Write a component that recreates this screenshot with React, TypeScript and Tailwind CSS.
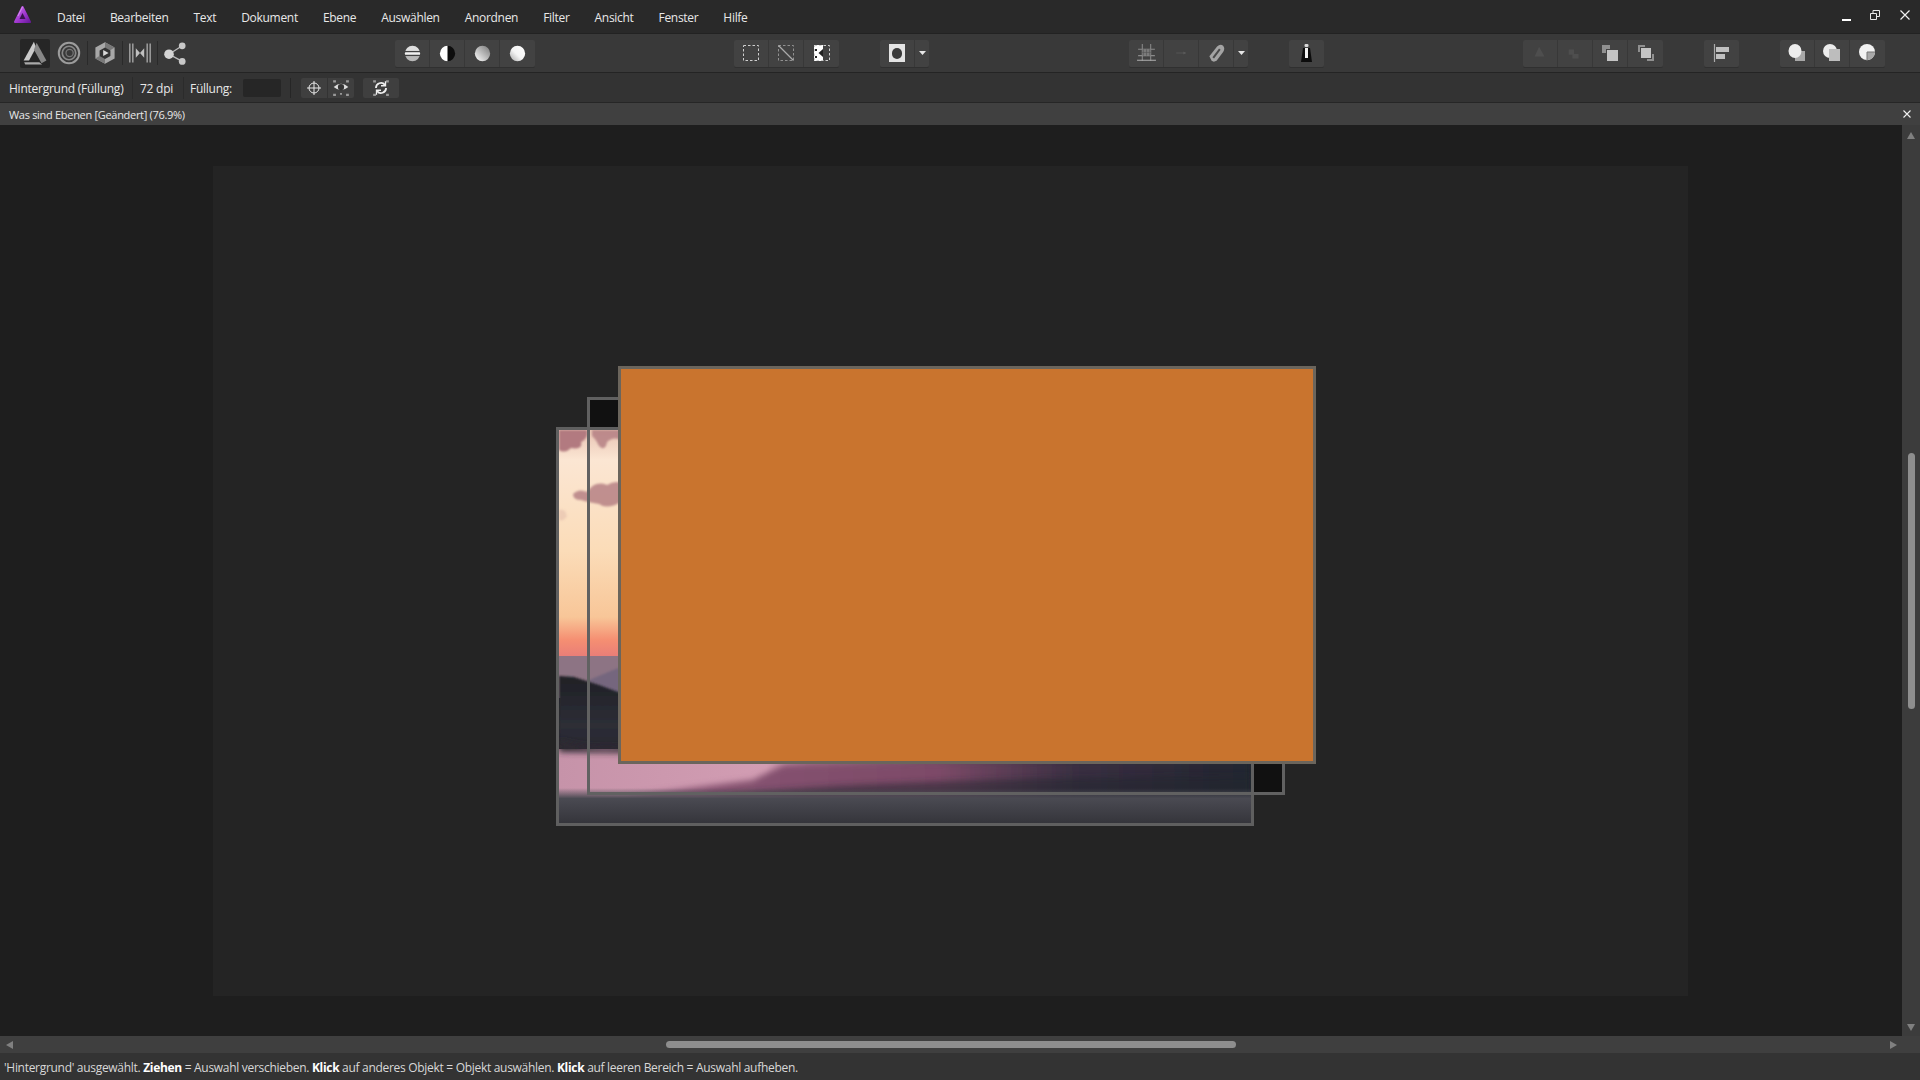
import type { ReactNode } from "react";

const menu = ["Datei", "Bearbeiten", "Text", "Dokument", "Ebene", "Auswählen", "Anordnen", "Filter", "Ansicht", "Fenster", "Hilfe"];

// Toolbar button, 35px wide, the groups sit them side by side
function Btn({ children, w = "w-[35px]" }: { children?: ReactNode; w?: string }) {
  return <div className={`${w} h-[27px] flex items-center justify-center bg-[#424242] border-r border-[#383838] last:border-r-0`}>{children}</div>;
}

function Group({ children, className = "" }: { children: ReactNode; className?: string }) {
  return <div className={`flex rounded-[2px] overflow-hidden shadow-[0_1px_0_#303030] ${className}`}>{children}</div>;
}

function Ico({ children, s = 20 }: { children: ReactNode; s?: number }) {
  return <svg width={s} height={s} viewBox="0 0 20 20" fill="none">{children}</svg>;
}

function Caret() {
  return <svg width="7" height="4" viewBox="0 0 7 4"><path d="M0 0h7L3.5 4z" fill="#e6e6e6" /></svg>;
}

function Logo() {
  return (
    <svg width="19" height="20" viewBox="0 0 19 20">
      <defs>
        <linearGradient id="lg" x1="0" y1="0" x2="1" y2="1">
          <stop offset="0" stopColor="#d070f0" />
          <stop offset="0.6" stopColor="#9c34cc" />
          <stop offset="1" stopColor="#6a1a9c" />
        </linearGradient>
      </defs>
      <path d="M9.5 2 L17 17 H2 Z" fill="url(#lg)" stroke="url(#lg)" strokeWidth="2" strokeLinejoin="round" />
      <path d="M9.5 8 L12.5 14 H6.5 Z" fill="#3a1450" />
      <path d="M9.5 2 L5 11" stroke="#e8a8ff" strokeWidth="1" opacity="0.7" />
    </svg>
  );
}

function PhotoPersona() {
  return (
    <svg width="26" height="26" viewBox="0 0 24 24">
      <path d="M11 1.5 L1.5 19 L6.5 19 L13 7 Z" fill="#cacaca" />
      <path d="M13.5 2.5 L22.5 19 L18 21.5 L11 9 Z" fill="#868686" />
      <path d="M2 20.5 L16 20.5 L18.5 22.5 L3 22.5 Z" fill="#aaaaaa" />
      <path d="M12 11.5 L15 17 H9 Z" fill="#262626" />
    </svg>
  );
}

function Photo() {
  return (
    <svg className="absolute inset-0 w-full h-full" viewBox="0 0 691 393" preserveAspectRatio="none">
      <defs>
        <linearGradient id="sky" x1="0" y1="0" x2="0" y2="1">
          <stop offset="0" stopColor="#e9c4b4" />
          <stop offset="0.13" stopColor="#fbe6d3" />
          <stop offset="0.53" stopColor="#fbdcb8" />
          <stop offset="0.82" stopColor="#f8c698" />
          <stop offset="0.92" stopColor="#f58f72" />
          <stop offset="1" stopColor="#e87c78" />
        </linearGradient>
        <linearGradient id="floor" x1="0" y1="0" x2="0" y2="1">
          <stop offset="0" stopColor="#4a4a52" stopOpacity="0" />
          <stop offset="0.3" stopColor="#4a4a52" />
          <stop offset="1" stopColor="#35353b" />
        </linearGradient>
        <linearGradient id="hill" x1="0" y1="0" x2="0" y2="1">
          <stop offset="0" stopColor="#1f2026" />
          <stop offset="0.6" stopColor="#2d2e36" />
          <stop offset="1" stopColor="#2a2530" />
        </linearGradient>
        <linearGradient id="mist" x1="0" y1="0" x2="1" y2="0">
          <stop offset="0" stopColor="#c693a9" />
          <stop offset="0.3" stopColor="#d29db3" />
          <stop offset="0.36" stopColor="#a77289" />
          <stop offset="0.75" stopColor="#2c2833" />
          <stop offset="1" stopColor="#22252f" />
        </linearGradient>
        <linearGradient id="ridge" x1="0" y1="0" x2="1" y2="0">
          <stop offset="0" stopColor="#8a5775" />
          <stop offset="0.5" stopColor="#7d4a68" />
          <stop offset="0.72" stopColor="#3a2f42" />
          <stop offset="1" stopColor="#22252f" />
        </linearGradient>
        <filter id="soft" x="-20%" y="-50%" width="140%" height="200%"><feGaussianBlur stdDeviation="3" /></filter>
        <filter id="soft1" x="-5%" y="-10%" width="110%" height="120%"><feGaussianBlur stdDeviation="1.2" /></filter>
      </defs>
      <rect width="691" height="228" fill="url(#sky)" />
      {/* clouds along the upper edge and the one in the middle */}
      <g filter="url(#soft1)" fill="#b27a80">
        <path d="M0 0 H28 Q30 8 22 12 Q24 20 12 18 Q6 24 0 20 Z" />
        <path d="M33 0 H62 V10 Q54 6 48 12 Q46 22 40 16 Q36 8 33 6 Z" opacity="0.8" />
        <path d="M14 64 Q20 58 28 62 Q36 50 48 55 Q56 50 62 53 V72 Q48 80 40 74 Q28 72 22 70 Q14 70 14 64 Z" opacity="0.8" />
        <path d="M0 80 Q6 78 8 86 Q4 92 0 90 Z" opacity="0.2" />
      </g>
      <rect y="226" width="691" height="42" fill="#8d7484" />
      <path d="M30 250 L59 238 L200 228 L200 280 L30 280 Z" fill="#75667e" filter="url(#soft1)" />
      <path d="M0 246 L15 247 L40 255 L59 262 L691 300 V326 H0 Z" fill="url(#hill)" filter="url(#soft1)" />
      <rect y="319" width="691" height="52" fill="url(#mist)" />
      <path d="M0 310 Q40 322 80 314 L691 306 V318 Q300 326 0 322 Z" fill="#2d2933" filter="url(#soft)" />
      <path d="M64 367 Q130 358 194 350 Q208 342 225 335 L691 328 V367 Z" fill="url(#ridge)" filter="url(#soft)" />
      <path d="M140 367 Q300 348 691 346 V367 Z" fill="#22252f" opacity="0.55" filter="url(#soft)" />
      <rect y="358" width="691" height="35" fill="url(#floor)" />
    </svg>
  );
}

export default function App() {
  return (
    <div className="w-[1920px] h-screen overflow-hidden flex flex-col bg-[#1e1e1e] text-[12px] text-[#e8e8e8] font-['Open_Sans','Liberation_Sans',sans-serif]">
      {/* menu */}
      <div className="h-[33px] shrink-0 flex items-center bg-[#292929] relative">
        <div className="w-[57px] pl-[13px] -mt-[4px]"><Logo /></div>
        <div className="flex gap-[25px] tracking-[-0.3px] mt-[2px]">
          {menu.map((m) => <span key={m}>{m}</span>)}
        </div>
        <div className="ml-auto flex items-center">
          <div className="w-[9px] h-[2px] bg-white mt-[6px] mr-[19px]" />
          <svg className="mr-[20px] -mt-[4px]" width="10" height="10" viewBox="0 0 10 10" fill="none" stroke="#e8e8e8"><path d="M.5 3.5h6v6h-6zM3 3.5V.5h6.5v6H6.5" /></svg>
          <svg className="mr-[10px] -mt-[4px]" width="10" height="10" viewBox="0 0 10 10" stroke="#f0f0f0" strokeWidth="1.2"><path d="M.5.5l9 9M9.5.5l-9 9" /></svg>
        </div>
      </div>

      {/* toolbar */}
      <div className="h-[40px] shrink-0 flex items-center bg-[#393939] border-y border-[#242424] border-t-[#222222]">
        <div className="flex items-center ml-[20px] w-[172px]">
          <div className="w-[30px] h-[29px] rounded-[2px] bg-[#262626] flex items-center justify-center"><PhotoPersona /></div>
          <div className="w-[38px] h-[24px] flex items-center justify-center border-r border-[#2a2a2a]">
            <Ico s={24}><circle cx="10" cy="10" r="8.5" stroke="#9c9c9c" strokeWidth="1.7" /><circle cx="10" cy="10" r="5.6" stroke="#888" strokeWidth="1.4" /><circle cx="10.5" cy="10" r="3" stroke="#777" /></Ico>
          </div>
          <div className="w-[35px] h-[24px] flex items-center justify-center border-r border-[#2a2a2a]">
            <Ico s={24}><path d="M10 1 L18 5.5 V14.5 L10 19 L2 14.5 V5.5 Z" fill="#a8a8a8" /><path d="M10 1 L18 5.5 L14 8 L10 6Z M2 14.5 L6 12 L10 14 L10 19 Z" fill="#787878" /><path d="M10 5.5 L14.5 8 V12.5 L10 15 L5.5 12.5 V8 Z" fill="#333" /><path d="M8.5 7.5 L13 10 L8.5 12.5 Z" fill="#d8d8d8" /></Ico>
          </div>
          <div className="w-[35px] h-[24px] flex items-center justify-center border-r border-[#2a2a2a]">
            <Ico s={24}><path d="M1.5 2v16M4 2v16M16 2v16M18.5 2v16" stroke="#9a9a9a" strokeWidth="1.3" /><path d="M6.5 6 L10 10 L6.5 14 Z M13.5 6 L10 10 L13.5 14 Z" fill="#c0c0c0" /></Ico>
          </div>
          <div className="w-[34px] h-[24px] flex items-center justify-center">
            <Ico s={24}><path d="M5 11 L16 4 M5 11 L16 17" stroke="#bbb" strokeWidth="1.1" /><circle cx="5" cy="11" r="4" fill="#d4d4d4" /><circle cx="16" cy="4" r="2.8" fill="#c8c8c8" /><circle cx="16" cy="17" r="2.8" fill="#c8c8c8" /></Ico>
          </div>
        </div>

        <Group className="ml-[203px]">
          <Btn><Ico s={17}><defs><clipPath id="c1"><circle cx="10" cy="10" r="9" /></clipPath></defs><g clipPath="url(#c1)"><rect width="20" height="7" fill="#e0e0e0" /><rect y="8.5" width="20" height="3" fill="#f0f0f0" /><rect y="13" width="20" height="7" fill="#b8b8b8" /></g></Ico></Btn>
          <Btn><Ico s={17}><circle cx="10" cy="10" r="9" fill="#0d0d0d" /><path d="M10 1a9 9 0 0 0 0 18z" fill="#fff" /></Ico></Btn>
          <Btn><Ico s={17}><defs><linearGradient id="g1" x1="0" y1="1" x2="1" y2="0"><stop offset="0" stopColor="#fff" /><stop offset="1" stopColor="#777" /></linearGradient></defs><circle cx="10" cy="10" r="9" fill="url(#g1)" /></Ico></Btn>
          <Btn><Ico s={17}><defs><linearGradient id="g2" x1="1" y1="0" x2="0" y2="1"><stop offset="0" stopColor="#fff" /><stop offset="0.55" stopColor="#f4f4f4" /><stop offset="1" stopColor="#a8a8a8" /></linearGradient></defs><circle cx="10" cy="10" r="9" fill="url(#g2)" /></Ico></Btn>
        </Group>

        <Group className="ml-[199px]">
          <Btn><Ico><rect x="2.5" y="2.5" width="15" height="15" stroke="#cfcfcf" strokeDasharray="2.5 2" /></Ico></Btn>
          <Btn><Ico><rect x="2.5" y="2.5" width="15" height="15" stroke="#909090" strokeDasharray="2.5 2" /><path d="M2.5 2.5l15 15" stroke="#aaa" strokeWidth="1.2" /></Ico></Btn>
          <Btn><Ico><path d="M2 2h9v16H2z" fill="#fff" /><rect x="2.5" y="2.5" width="15" height="15" stroke="#cfcfcf" strokeDasharray="2.5 2" /><path d="M11 6 L6.5 10 L11 14 Z" fill="#222" /><path d="M3 6h2v2H3zM3 13h2v2H3z" fill="#222" /></Ico></Btn>
        </Group>

        <Group className="ml-[41px]">
          <Btn><div className="w-[16px] h-[18px] bg-[#e4e4e4] flex items-center justify-center"><div className="w-[10px] h-[11px] rounded-full bg-[#3a3a3a]" /></div></Btn>
          <Btn w="w-[14px]"><Caret /></Btn>
        </Group>

        <Group className="ml-[200px]">
          <Btn><Ico s={21}><path d="M6 1v16M14 1v16M2 6h16M2 12h16" stroke="#8a8a8a" /><rect x="6" y="6" width="8" height="6" fill="#7a7a7a" /><path d="M7 6v6M10 6v6M13 6v6M6 9h8" stroke="#555" strokeWidth="0.6" /><path d="M1 16.5h18" stroke="#b0b0b0" /></Ico></Btn>
          <Btn><Ico s={16}><path d="M4 10h12" stroke="#5c5c5c" /><path d="M13 8l3 2-3 2" fill="#5c5c5c" /></Ico></Btn>
          <Btn><Ico s={22}><path d="M6 17 L4 13 L11 4 Q14 1.5 16.5 3.5 Q18.5 6 16.5 9 L10.5 17 L8 18 Z" fill="#a4a4a4" /><path d="M7.5 14.5 L13.5 6.5" stroke="#4a4a4a" strokeWidth="1.8" /></Ico></Btn>
          <Btn w="w-[14px]"><Caret /></Btn>
        </Group>

        <Group className="ml-[41px]">
          <Btn><svg width="13" height="20" viewBox="0 0 13 20"><path d="M3 5h7l2 14H1z" fill="#0c0c0c" /><rect x="4.5" y="1" width="4" height="3" rx="1.2" fill="#d8d8d8" /><rect x="5" y="5" width="3" height="10" fill="#f2f2f2" /></svg></Btn>
        </Group>

        <Group className="ml-[199px]">
          <Btn><Ico s={18}><path d="M9 3 L15 14 H4 Z" fill="#4e4e4e" /></Ico></Btn>
          <Btn><Ico s={18}><path d="M3 6h6v5h5v5H7v-4H3z" fill="#4e4e4e" /></Ico></Btn>
          <Btn><Ico><path d="M2 2h8v4H6v4H2z" fill="#909090" /><rect x="7" y="7" width="11" height="11" fill="#c4c4c4" /></Ico></Btn>
          <Btn><Ico><path d="M2 2h7v2H4v5H2zM11 16h5v-5h2v7h-7z" fill="#909090" /><rect x="5" y="5" width="10" height="10" fill="#c4c4c4" /></Ico></Btn>
        </Group>

        <Group className="ml-[41px]">
          <Btn><Ico><path d="M2.5 1v18" stroke="#aaa" strokeWidth="1.2" /><rect x="4" y="4" width="13" height="5" fill="#c0c0c0" /><rect x="4" y="11" width="9" height="5" fill="#c0c0c0" /></Ico></Btn>
        </Group>

        <Group className="ml-[41px]">
          <Btn><Ico><rect x="8" y="8" width="10" height="10" fill="#a8a8a8" /><ellipse cx="8" cy="8" rx="6.5" ry="7" fill="#ececec" /></Ico></Btn>
          <Btn><Ico><circle cx="8" cy="8" r="7" fill="#ececec" /><rect x="7" y="6" width="11" height="12" fill="#bdbdbd" /></Ico></Btn>
          <Btn><Ico><circle cx="9" cy="9" r="8" fill="#f2f2f2" /><path d="M9 9h8a8 8 0 0 1-8 8z" fill="#a8a8a8" /><path d="M9 9h8M9 9v9" stroke="#777" /></Ico></Btn>
        </Group>
      </div>

      {/* context bar */}
      <div className="h-[30px] shrink-0 flex items-center bg-[#333333] border-b border-[#262626]">
        <span className="ml-[9px] w-[123px] tracking-[-0.25px] whitespace-nowrap mt-[2px]">Hintergrund (Füllung)</span>
        <span className="w-[51px] h-[22px] border-l border-[#2b2b2b] pl-[7px] pt-[2px] flex items-center tracking-[-0.25px]">72 dpi</span>
        <span className="w-[60px] h-[22px] border-l border-[#2b2b2b] pl-[6px] pt-[2px] flex items-center tracking-[-0.25px]">Füllung:</span>
        <div className="w-[38px] h-[18px] rounded-[2px] bg-[#262626]" />
        <div className="w-px h-[20px] bg-[#262626] ml-[9px]" />
        <div className="ml-[10px] flex rounded-[2px] overflow-hidden">
          <div className="w-[27px] h-[20px] bg-[#3f3f3f] border-r border-[#333333] flex items-center justify-center">
            <svg width="16" height="16" viewBox="0 0 16 16" fill="none" stroke="#e8e8e8"><circle cx="8" cy="8" r="5" /><path d="M8 1v14M1 8h14" /></svg>
          </div>
          <div className="w-[26px] h-[20px] bg-[#3f3f3f] flex items-center justify-center">
            <svg width="18" height="18" viewBox="0 0 16 16" fill="none"><path d="M1 2h2.5M12.5 2h2.5M1 14h2.5M12.5 14h2.5" stroke="#999" strokeWidth="2" /><path d="M1.5 7 Q8 1.5 14.5 7 Q8 12.5 1.5 7Z" fill="#dddddd" /><circle cx="8" cy="7.2" r="2.8" fill="#333" /><path d="M8 12.5V14" stroke="#ddd" /></svg>
          </div>
        </div>
        <div className="ml-[9px] w-[36px] h-[20px] rounded-[2px] bg-[#3f3f3f] flex items-center justify-center">
          <svg width="18" height="18" viewBox="0 0 16 16" fill="none"><path d="M1 2h2.5M12.5 2h2.5M1 14h2.5M12.5 14h2.5" stroke="#999" strokeWidth="2" /><path d="M3.5 8a4.5 4.5 0 0 1 8-2.8M12.5 8a4.5 4.5 0 0 1-8 2.8" stroke="#eeeeee" strokeWidth="1.6" /><path d="M12 2v4H8M4 14v-4h4" stroke="#eeeeee" strokeWidth="1.2" /></svg>
        </div>
      </div>

      {/* tab */}
      <div className="h-[22px] shrink-0 flex items-center bg-[#404040]">
        <span className="ml-[9px] text-[11px] tracking-[-0.3px] mt-[2px]">Was sind Ebenen [Geändert] (76.9%)</span>
        <svg className="ml-auto mr-[9px]" width="8" height="8" viewBox="0 0 8 8" stroke="#f0f0f0" strokeWidth="1.1"><path d="M.5.5l7 7M7.5.5l-7 7" /></svg>
      </div>

      {/* canvas + vertical scrollbar */}
      <div className="flex-1 flex min-h-0">
        <div className="flex-1 pl-[213px] pt-[41px] bg-[#1e1e1e]">
          <div className="relative w-[1475px] h-[830px] bg-[#242424]">
            <div className="absolute left-[374px] top-[231px] w-[698px] h-[398px] bg-[#111111]" />
            <div className="absolute left-[343px] top-[261px] w-[698px] h-[399px] border-[3px] border-[#5f5f5f]">
              <div className="relative w-full h-full overflow-hidden"><Photo /></div>
            </div>
            <div className="absolute left-[374px] top-[231px] w-[698px] h-[398px] border-[3px] border-[#616161]" />
            <div className="absolute left-[405px] top-[200px] w-[698px] h-[398px] bg-[#c9742e] border-[3px] border-[#6b655c]" />
          </div>
        </div>
        <div className="w-[18px] shrink-0 bg-[#3c3c3c] flex flex-col items-center pt-[7px] pb-[5px]">
          <svg width="8" height="7" viewBox="0 0 8 7"><path d="M4 0l4 7H0z" fill="#808080" /></svg>
          <div className="w-[7px] h-[256px] mt-[314px] rounded-full bg-[#8e8e8e]" />
          <svg className="mt-auto" width="8" height="7" viewBox="0 0 8 7"><path d="M4 7L0 0h8z" fill="#808080" /></svg>
        </div>
      </div>

      {/* horizontal scrollbar */}
      <div className="h-[17px] shrink-0 flex items-center bg-[#3f3f3f]">
        <svg className="ml-[6px]" width="7" height="8" viewBox="0 0 7 8"><path d="M0 4l7-4v8z" fill="#808080" /></svg>
        <div className="ml-[653px] w-[570px] h-[7px] rounded-full bg-[#8e8e8e]" />
        <svg className="ml-[654px]" width="7" height="8" viewBox="0 0 7 8"><path d="M7 4L0 0v8z" fill="#808080" /></svg>
      </div>

      {/* status */}
      <div className="h-[27px] shrink-0 flex items-center bg-[#333333] pl-[4px] pt-[2px] tracking-[-0.3px] text-[#d8d8d8] whitespace-pre">
        <span>'Hintergrund' ausgewählt. <b className="text-white">Ziehen</b> = Auswahl verschieben. <b className="text-white">Klick</b> auf anderes Objekt = Objekt auswählen. <b className="text-white">Klick</b> auf leeren Bereich = Auswahl aufheben.</span>
      </div>
    </div>
  );
}
